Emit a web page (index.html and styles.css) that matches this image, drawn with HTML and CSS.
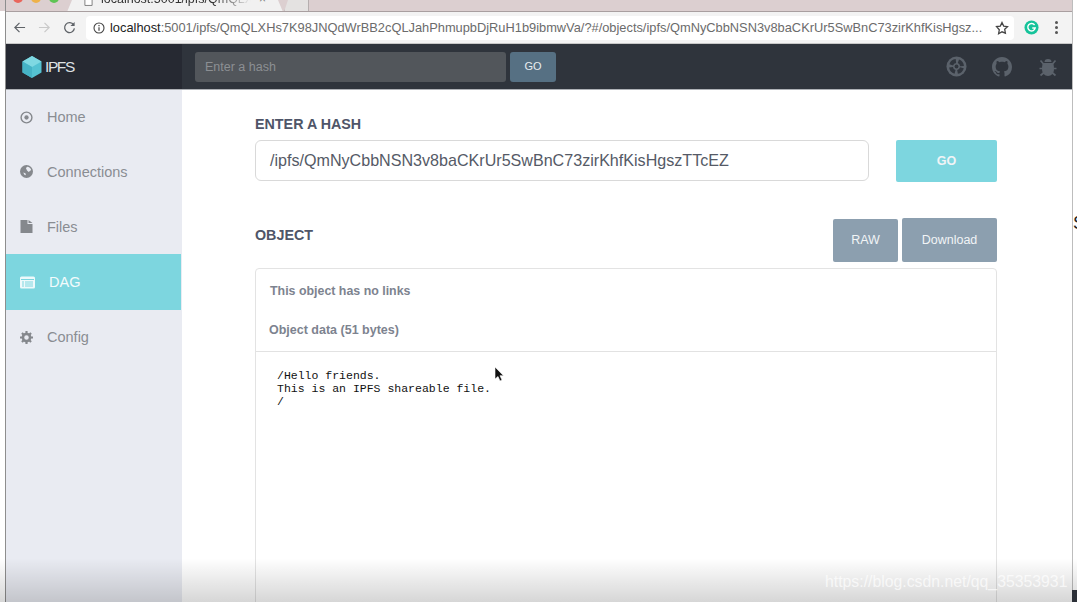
FILE: index.html
```html
<!DOCTYPE html>
<html lang="en">
<head>
<meta charset="utf-8">
<title>IPFS</title>
<link rel="stylesheet" href="styles.css">
</head>
<body>
<div class="screen">
  <div class="edge-left"></div>
  <div class="window">
    <div class="tabbar">
      <div class="lights"><i class="red"></i><i class="amber"></i><i class="green"></i></div>
      <div class="tab">
        <svg class="tab-icon" viewBox="0 0 10 12"><path d="M1 .5h5.500L9 3v8.500H1z" fill="#fff" stroke="#777"/></svg>
        <span class="tab-title">localhost:5001/ipfs/QmQLXHs</span>
        <span class="tab-x">×</span>
      </div>
      <div class="newtab"></div>
    </div>
    <div class="toolbar">
      <svg class="tool" viewBox="0 0 14 14"><path d="M13 7H2M7 2 2 7l5 5" fill="none" stroke="#5f6368" stroke-width="1.300"/></svg>
      <svg class="tool" viewBox="0 0 14 14"><path d="M1 7h11M7 2l5 5-5 5" fill="none" stroke="#c9c9c9" stroke-width="1.300"/></svg>
      <svg class="tool" viewBox="0 0 14 14"><path d="M11.500 4.200A5.300 5.300 0 1 0 12.300 8" fill="none" stroke="#5f6368" stroke-width="1.400"/><path d="M12.500 1v4.500H8z" fill="#5f6368"/></svg>
      <div class="omnibox">
        <svg class="info" viewBox="0 0 12 12"><circle cx="6" cy="6" r="5" fill="none" stroke="#444" stroke-width="1.100"/><path d="M6 5.200v3.600M6 3v1.200" stroke="#444" stroke-width="1.200"/></svg>
        <span class="url"><b>localhost</b>:5001/ipfs/QmQLXHs7K98JNQdWrBB2cQLJahPhmupbDjRuH1b9ibmwVa/?#/objects/ipfs/QmNyCbbNSN3v8baCKrUr5SwBnC73zirKhfKisHgsz...</span>
        <svg class="star" viewBox="0 0 14 14"><path d="m7 1.500 1.700 3.600 3.800.5-2.800 2.700.7 3.900L7 10.800l-3.400 1.900.7-3.900L1.500 5.600l3.800-.5z" fill="none" stroke="#444" stroke-width="1.300"/></svg>
      </div>
      <svg class="grammarly" viewBox="0 0 16 16"><circle cx="8" cy="8" r="7.500" fill="#15c39a"/><path d="M11.300 5.300A4 4 0 1 0 12 8.500H8.800" fill="none" stroke="#fff" stroke-width="1.500"/></svg>
      <div class="menu-dots"><i></i><i></i><i></i></div>
    </div>
    <header class="navbar">
      <div class="brand">
        <svg class="cube" viewBox="0 0 20 22"><path d="M10 0 19.500 5.500v11L10 22 .5 16.500v-11z" fill="#55c2d2"/><path d="M10 0 19.500 5.500 10 11 .5 5.500z" fill="#7fd8e2"/><path d="M10 11v11L.5 16.500v-11z" fill="#46b3c6"/></svg>
        <span class="brand-name">IPFS</span>
      </div>
      <div class="nav-search">
        <div class="nav-input">Enter a hash</div>
        <div class="nav-go">GO</div>
      </div>
      <div class="nav-icons">
        <svg class="ring" viewBox="0 0 22 22"><circle cx="11" cy="11" r="10.500" fill="#5b626b"/><circle cx="11" cy="11" r="5.800" fill="none" stroke="#30353d" stroke-width="4" stroke-dasharray="6.400 2.710" stroke-dashoffset="-1.355"/><circle cx="11" cy="11" r="2" fill="#30353d"/></svg>
        <svg class="gh" viewBox="0 0 16 16"><path d="M8 0C3.580 0 0 3.580 0 8c0 3.540 2.290 6.530 5.470 7.590.4.070.55-.17.55-.38 0-.19-.01-.82-.01-1.490-2.010.37-2.530-.49-2.690-.94-.09-.23-.48-.94-.82-1.130-.28-.15-.68-.52-.01-.53.63-.01 1.080.58 1.230.82.72 1.210 1.870.87 2.330.66.07-.52.28-.87.51-1.070-1.780-.2-3.640-.89-3.640-3.950 0-.87.31-1.590.82-2.150-.08-.2-.36-1.020.08-2.120 0 0 .67-.21 2.200.82.64-.18 1.320-.27 2-.27.68 0 1.360.09 2 .27 1.530-1.040 2.200-.82 2.200-.82.44 1.100.16 1.920.08 2.120.51.56.82 1.270.82 2.150 0 3.070-1.870 3.750-3.650 3.950.29.25.54.73.54 1.480 0 1.070-.01 1.930-.01 2.200 0 .21.15.46.55.38A8.013 8.013 0 0 0 16 8c0-4.420-3.580-8-8-8z" fill="#5b626b"/></svg>
        <svg class="bug" viewBox="0 0 18 20"><path d="M5.500 5a3.500 3 0 0 1 7 0z" fill="#5b626b"/><path d="M4 6h10c.7 1.500 1 3.500 1 6 0 4-2.500 7-6 7s-6-3-6-7c0-2.500.3-4.500 1-6z" fill="#5b626b"/><path d="M1.500 3.500 4.500 7M16.500 3.500 13.500 7M.5 11.500h3M17.500 11.500h-3M1.500 18.500 5 15.500M16.500 18.500 13 15.500" stroke="#5b626b" stroke-width="1.700"/></svg>
      </div>
    </header>
    <div class="body">
      <nav class="sidebar">
        <a class="item">
          <svg class="ic" viewBox="0 0 12 12"><circle cx="6" cy="6" r="5" fill="none" stroke="#85888d" stroke-width="1.300"/><circle cx="6" cy="6" r="2" fill="#85888d"/></svg>
          <span>Home</span>
        </a>
        <a class="item">
          <svg class="ic" viewBox="0 0 12 12"><circle cx="6" cy="6" r="6" fill="#85888d"/><path d="M6.500 1.500c2 0 3.500 1.500 3.800 3L8 6.500 6.500 5 5.500 3zM3 7l2 .5.5 2L4 9z" fill="#e9ebf2"/></svg>
          <span>Connections</span>
        </a>
        <a class="item">
          <svg class="ic" viewBox="0 0 12 13"><path d="M0 0h7v4h5v9H0zM8 0l4 3H8z" fill="#85888d"/></svg>
          <span>Files</span>
        </a>
        <a class="item active">
          <svg class="ic wide" viewBox="0 0 15 12"><rect width="15" height="12" rx="1.500" fill="#eef9fb"/><path d="M1 3h13" stroke="#7cd6df"/><path d="M2 5.500h2M2 7.500h2M2 9.500h2M5 5.500h8M5 7.500h8M5 9.500h8" stroke="#7cd6df"/></svg>
          <span>DAG</span>
        </a>
        <a class="item">
          <svg class="ic" viewBox="0 0 12 12"><circle cx="6" cy="6" r="3.300" fill="none" stroke="#85888d" stroke-width="2.400"/><path d="M6 0v2.500M6 9.500V12M0 6h2.500M9.500 6H12M1.800 1.800l1.800 1.800M8.400 8.400l1.800 1.800M10.200 1.800 8.400 3.600M3.600 8.400l-1.800 1.800" stroke="#85888d" stroke-width="2"/></svg>
          <span>Config</span>
        </a>
      </nav>
      <main class="content">
        <h2 class="label">ENTER A HASH</h2>
        <div class="hash-row">
          <div class="hash-input">/ipfs/QmNyCbbNSN3v8baCKrUr5SwBnC73zirKhfKisHgszTTcEZ</div>
          <div class="btn go">GO</div>
        </div>
        <div class="object-head">
          <h2 class="label">OBJECT</h2>
          <div class="actions">
            <div class="btn raw">RAW</div>
            <div class="btn download">Download</div>
          </div>
        </div>
        <section class="panel">
          <div class="panel-head">
            <p class="no-links">This object has no links</p>
            <p class="data-title">Object data (51 bytes)</p>
          </div>
          <pre class="data">/Hello friends.
This is an IPFS shareable file.
/</pre>
        </section>
      </main>
    </div>
  </div>
  <div class="edge-right"><span class="edge-s">S</span></div>
  <svg class="cursor" viewBox="0 0 10 16"><path d="M1 1v12l3-2.500 2 4.500 2-1-2-4.300h3.500z" fill="#111" stroke="#fff" stroke-width=".6"/></svg>
  <div class="fade"></div>
  <div class="watermark">https://blog.csdn.net/qq_35353931</div>
  <div class="corner"></div>
</div>
</body>
</html>
```
FILE: styles.css
```css
* { box-sizing: border-box; }
html, body { margin: 0; height: 100%; overflow: hidden; background: #fff; }
body { font-family: "Liberation Sans", Arial, sans-serif; }
.screen { position: relative; display: flex; width: 1077px; height: 602px; overflow: hidden; }
.edge-left { width: 6px; flex: none; background: linear-gradient(#dccfd0 11px, #fff 11px); border-right: 1px solid #8e8e8e; }
.edge-right { width: 5px; flex: none; background: #fff; border-left: 1px solid #bdbdbd; padding-top: 213px; overflow: hidden; }
.edge-s { display: block; font-size: 18px; line-height: 20px; color: #222; }
.window { flex: 1; min-width: 0; display: flex; flex-direction: column; }

.tabbar { height: 12px; flex: none; display: flex; align-items: flex-end; overflow: hidden; background: #dccfd0; border-bottom: 1px solid #a99fa0; }
.lights { display: flex; gap: 8px; margin: 0 0 8px 7px; flex: none; }
.lights i { width: 10px; height: 10px; border-radius: 50%; }
.red { background: #e9665c; }
.amber { background: #eeb24a; }
.green { background: #5fc454; }
.tab { width: 216px; height: 12px; flex: none; display: flex; align-items: flex-end; background: #f1f1f1; margin: 0 0 -1px 8px; padding: 0 0 6px 17px; gap: 8px; clip-path: polygon(5px 0, calc(100% - 5px) 0, 100% 100%, 0 100%); }
.tab-icon { width: 9px; height: 11px; flex: none; }
.tab-title { font-size: 12.500px; line-height: 14px; color: #333; white-space: nowrap; width: 150px; flex: none; overflow: hidden; -webkit-mask-image: linear-gradient(to right, #000 75%, transparent); mask-image: linear-gradient(to right, #000 75%, transparent); }
.tab-x { font-size: 12px; line-height: 14px; color: #777; }
.newtab { width: 25px; height: 12px; margin: 0 0 -1px 1px; background: #e4e2e1; border: 1px solid #b5aeae; border-top: 0; clip-path: polygon(4px 0, 100% 0, 100% 100%, 0 100%); }

.toolbar { height: 32px; flex: none; display: flex; align-items: center; background: #f3f3f3; border-bottom: 1px solid #c8c8c8; padding-left: 7px; }
.tool { width: 13px; height: 13px; margin-right: 12px; flex: none; }
.tool:nth-child(3) { margin-right: 10px; }
.omnibox { width: 928px; height: 24px; display: flex; align-items: center; background: #fff; border-radius: 4px; padding-left: 7px; flex: none; }
.info { width: 12px; height: 12px; flex: none; margin-right: 5px; }
.url { font-size: 12.830px; color: #6b6b6b; white-space: nowrap; width: 873px; overflow: hidden; flex: none; }
.url b { font-weight: 400; color: #222; }
.star { width: 14px; height: 14px; margin-left: 12px; flex: none; }
.grammarly { width: 15px; height: 15px; margin-left: 10px; flex: none; }
.menu-dots { display: flex; flex-direction: column; gap: 2px; margin-left: 16px; }
.menu-dots i { width: 3px; height: 3px; border-radius: 50%; background: #555; }

.navbar { height: 46px; flex: none; display: flex; align-items: center; background: #2f343c; border-bottom: 1px solid #aeb1b6; }
.brand { width: 176px; height: 45px; flex: none; display: flex; align-items: center; padding-left: 16px; gap: 3px; background: #262932; color: #dfe2e5; font-size: 15.500px; }
.brand-name { letter-spacing: -1.400px; }
.cube { width: 20px; height: 22px; flex: none; }
.nav-search { display: flex; gap: 4px; margin-left: 13px; }
.nav-input { width: 311px; height: 30px; line-height: 30px; padding-left: 10px; background: #52565b; border-radius: 3px; color: #8c8f93; font-size: 12.500px; }
.nav-go { width: 46px; height: 30px; line-height: 29px; text-align: center; background: #567083; border-radius: 3px; color: #e8edf0; font-size: 11px; }
.nav-icons { margin-left: auto; display: flex; align-items: center; padding-right: 15px; }
.ring { width: 21px; height: 21px; flex: none; }
.gh { width: 20px; height: 20px; flex: none; margin-left: 25px; }
.bug { width: 18px; height: 20px; flex: none; margin-left: 27px; }

.body { flex: 1; min-height: 0; display: flex; }
.sidebar { width: 176px; flex: none; background: #e9ebf2; }
.item { height: 55px; display: flex; align-items: center; padding-left: 14px; color: #8a8d92; font-size: 14.500px; }
.item:first-child { height: 54px; }
.ic { width: 13px; height: 13px; flex: none; margin-right: 14px; }
.ic.wide { width: 15px; margin-right: 14px; }
.item.active { height: 56px; background: #7dd6df; color: #f3fbfc; margin-right: 1px; }
.item.active + .item { height: 54px; }

.content { flex: 1; min-width: 0; padding: 25px 0 0 73px; }
.label { margin: 0; font-size: 14.300px; line-height: 18px; font-weight: 700; color: #4f5568; }
.hash-row { display: flex; align-items: flex-start; margin-top: 7px; }
.hash-input { width: 614px; height: 41px; line-height: 39px; padding-left: 14px; border: 1px solid #d9d9d9; border-radius: 6px; color: #555a66; font-size: 16.100px; white-space: nowrap; }
.btn { display: flex; align-items: center; justify-content: center; color: #f1f4f6; font-size: 12.500px; border-radius: 2px; }
.go { width: 101px; height: 42px; margin-left: 27px; background: #7dd6df; font-weight: 700; }
.object-head { display: flex; justify-content: space-between; align-items: flex-start; width: 742px; margin-top: 36px; }
.object-head .label { margin-top: 8px; }
.actions { display: flex; gap: 4px; align-items: center; }
.raw { width: 65px; height: 43px; background: #8c9faf; }
.download { width: 95px; height: 44px; background: #8c9faf; }
.panel { width: 742px; height: 400px; margin-top: 6px; border: 1px solid #e3e3e3; border-radius: 4px; }
.panel-head { height: 83px; border-bottom: 1px solid #e2e2e2; padding: 14px 0 0 14px; }
.panel-head p { margin: 0; font-size: 12.500px; font-weight: 700; color: #7d838f; line-height: 16px; }
.panel-head .no-links { font-size: 12.400px; }
.panel-head .data-title { margin-top: 23px; margin-left: -1px; }
.data { margin: 0; padding: 17px 0 0 21px; font-family: "Liberation Mono", "Courier New", monospace; font-size: 11.500px; line-height: 13px; color: #111; }

.cursor { position: absolute; left: 494px; top: 366px; width: 10px; height: 16px; }
.fade { position: absolute; left: 0; right: 0; bottom: 0; height: 44px; background: linear-gradient(to bottom, rgba(0,0,0,0), rgba(0,0,0,.16)); pointer-events: none; }
.watermark { position: absolute; left: 825px; bottom: 10px; font-size: 15.800px; line-height: 20px; color: rgba(255,255,255,.7); white-space: nowrap; }
.corner { position: absolute; right: 0; bottom: 0; width: 5px; height: 12px; background: #2c3038; }
```
